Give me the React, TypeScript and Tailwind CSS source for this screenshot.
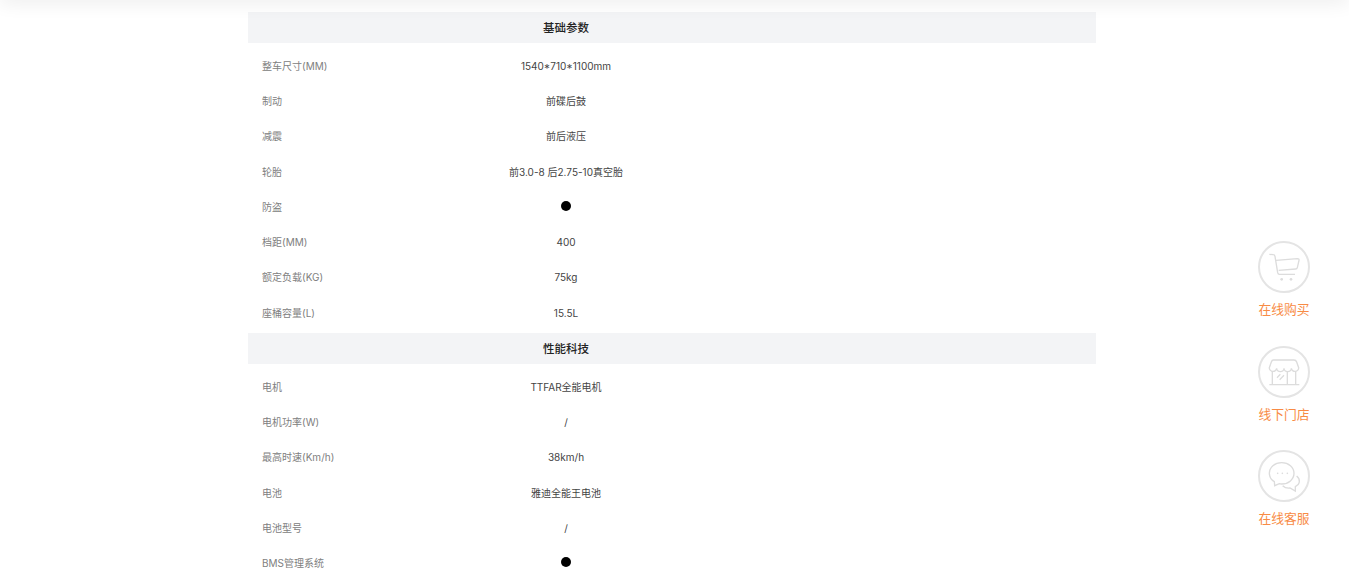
import React from 'react';

const font = { fontFamily: 'Inter, "Noto Sans CJK SC", sans-serif' };

type Row = { label: string; value?: string };

const basic: Row[] = [
  { label: '整车尺寸(MM)', value: '1540*710*1100mm' },
  { label: '制动', value: '前碟后鼓' },
  { label: '减震', value: '前后液压' },
  { label: '轮胎', value: '前3.0-8 后2.75-10真空胎' },
  { label: '防盗' },
  { label: '档距(MM)', value: '400' },
  { label: '额定负载(KG)', value: '75kg' },
  { label: '座桶容量(L)', value: '15.5L' },
];

const tech: Row[] = [
  { label: '电机', value: 'TTFAR全能电机' },
  { label: '电机功率(W)', value: '/' },
  { label: '最高时速(Km/h)', value: '38km/h' },
  { label: '电池', value: '雅迪全能王电池' },
  { label: '电池型号', value: '/' },
  { label: 'BMS管理系统' },
];

function Section({ title, rows }: { title: string; rows: Row[] }) {
  return (
    <div>
      <div className="grid h-[31px] grid-cols-[212px_212px] items-center bg-[#f3f4f6]">
        <div />
        <div className="pt-[2px] text-center text-[11.5px] font-medium text-[#222]">{title}</div>
      </div>
      <div className="pt-[5.800px] pb-[2.200px]">
        {rows.map((r) => (
          <div key={r.label} className="grid h-[35.25px] grid-cols-[212px_212px] items-center text-[10px]">
            <div className="pl-[14px] text-[#808080]">{r.label}</div>
            <div className="flex justify-center text-[#444]">
              {r.value ?? <span className="mb-[3px] h-[10px] w-[10px] rounded-full bg-black" />}
            </div>
          </div>
        ))}
      </div>
    </div>
  );
}

// icons are drawn in the coordinates of the 3x crop, centred on the ring
function Icon({ children }: { children: React.ReactNode }) {
  return (
    <svg width="48" height="48" viewBox="60 36 144 144" fill="none" stroke="#dcdcdc" strokeWidth="4">
      {children}
    </svg>
  );
}

function CartIcon() {
  return (
    <Icon>
      <path d="M88 70L100 71Q104 71 105 76L113 125Q114 130 118 130H165" />
      <path d="M108 88L172 83Q178 83 177 88L172 110Q171 114 167 114L116 118" />
      <circle cx="125" cy="145" r="4" fill="#dcdcdc" stroke="none" />
      <circle cx="153" cy="145" r="4" fill="#dcdcdc" stroke="none" />
    </Icon>
  );
}

function StoreIcon() {
  return (
    <Icon>
      <path d="M100 72H162Q168 72 170 78L176 95A11 10 0 0 1 154 97A11 10 0 0 1 132 97A11 10 0 0 1 110 97A11 10 0 0 1 88 95L94 78Q96 72 100 72Z" />
      <path d="M97 106V146M167 106V146M88 146H178M142 106V146" />
      <path d="M111 125L121 115M119 131L132 118" />
    </Icon>
  );
}

function ChatIcon() {
  return (
    <Icon>
      <path d="M125 68C104 68 88 82 88 100C88 111 94 120 103 125L104 137L118 131C120 131 123 132 125 132C146 132 162 118 162 100C162 82 146 68 125 68Z" />
      <path d="M170 108C176 113 179 120 178 126C177 132 172 137 166 140L166 153L150 144C142 145 134 143 128 137" />
      <circle cx="113" cy="100" r="2.500" fill="#dcdcdc" stroke="none" />
      <circle cx="127" cy="100" r="2.500" fill="#dcdcdc" stroke="none" />
      <circle cx="142" cy="100" r="2.500" fill="#dcdcdc" stroke="none" />
    </Icon>
  );
}

function SideButton({ label, children }: { label: string; children: React.ReactNode }) {
  return (
    <div className="flex w-[52px] flex-col items-center">
      <div className="flex h-[52px] w-[52px] items-center justify-center rounded-full border-2 border-[#e4e4e4]">
        {children}
      </div>
      <div className="mt-[8px] whitespace-nowrap text-[12.800px] leading-[18px] text-[#f88b45]">{label}</div>
    </div>
  );
}

export default function App() {
  return (
    <div className="relative h-[587px] overflow-hidden bg-white" style={font}>
      {/* shadow of the fixed header just above the page */}
      <div className="absolute inset-x-0 -top-[10px] h-[10px] shadow-[0_0_20px_rgba(0,0,0,0.12)]" />

      <div className="ml-[248px] w-[848px] pt-[12px]">
        <Section title="基础参数" rows={basic} />
        <Section title="性能科技" rows={tech} />
      </div>

      <div className="absolute left-[1258px] top-[241px] flex flex-col gap-[26.700px]">
        <SideButton label="在线购买"><CartIcon /></SideButton>
        <SideButton label="线下门店"><StoreIcon /></SideButton>
        <SideButton label="在线客服"><ChatIcon /></SideButton>
      </div>
    </div>
  );
}
